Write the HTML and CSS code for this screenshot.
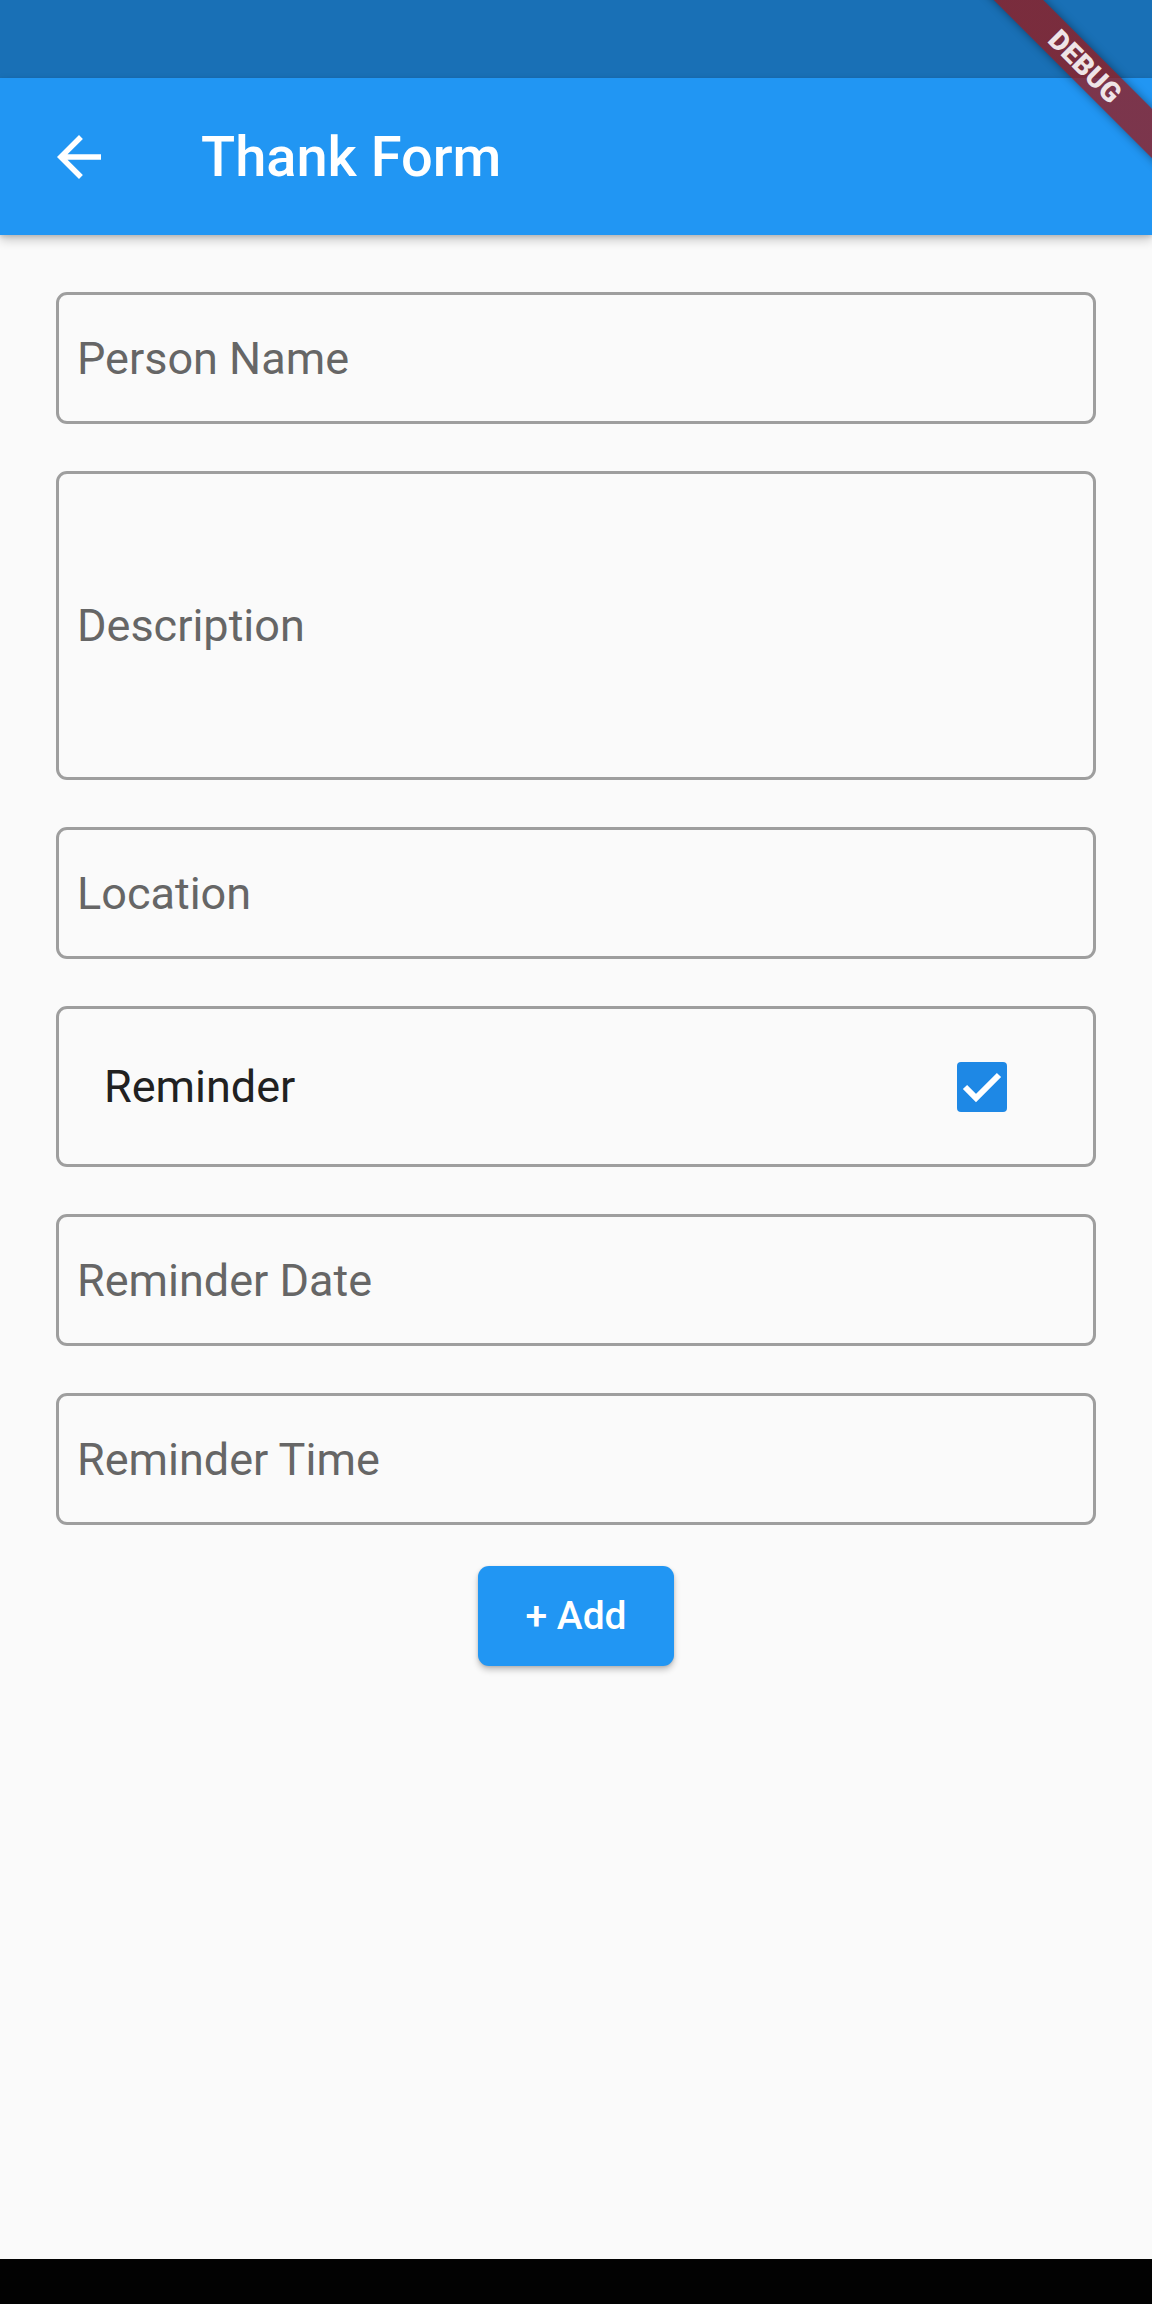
FILE: index.html
```html
<!DOCTYPE html>
<html lang="en">
<head>
<meta charset="utf-8">
<title>Thank Form</title>
<link rel="stylesheet" href="styles.css">
</head>
<body>
<div class="screen">
  <div class="status-bar"></div>
  <header class="app-bar">
    <button class="back" aria-label="Back">
      <svg viewBox="0 0 24 24" width="66" height="66"><path d="M20 11H7.830l5.59-5.59L12 4l-8 8 8 8 1.41-1.41L7.83 13H20v-2z" fill="#fff"/></svg>
    </button>
    <h1 class="title">Thank Form</h1>
  </header>
  <main class="form">
    <div class="fields">
      <div class="field"><span class="placeholder">Person Name</span></div>
      <div class="field field-tall"><span class="placeholder">Description</span></div>
      <div class="field"><span class="placeholder">Location</span></div>
      <div class="field field-check">
        <span class="check-label">Reminder</span>
        <span class="checkbox"><svg viewBox="0 0 50 50" width="50" height="50"><polyline points="8,25 19,36 42,13" fill="none" stroke="#fff" stroke-width="6"/></svg></span>
      </div>
      <div class="field"><span class="placeholder">Reminder Date</span></div>
      <div class="field"><span class="placeholder">Reminder Time</span></div>
    </div>
    <div class="actions">
      <button class="add-btn">+ Add</button>
    </div>
  </main>
  <div class="nav-bar"></div>
  <div class="debug-banner">DEBUG</div>
</div>
</body>
</html>
```

FILE: styles.css
```css
html, body {
  margin: 0;
  padding: 0;
}

body {
  font-family: Roboto, "Noto Sans", "Liberation Sans", sans-serif;
  background: #fafafa;
}

.screen {
  position: relative;
  height: 2304px;
  display: flex;
  flex-direction: column;
  background: #fafafa;
  overflow: hidden;
}

.status-bar {
  height: 78px;
  background: #1970b6;
  flex: none;
}

.app-bar {
  position: relative;
  z-index: 1;
  height: 157px;
  flex: none;
  display: flex;
  align-items: center;
  background: #2196f3;
  box-shadow: 0 5px 10px rgba(0, 0, 0, 0.2), 0 2px 4px rgba(0, 0, 0, 0.12);
}

.back {
  width: 66px;
  height: 66px;
  margin-left: 46px;
  padding: 0;
  border: none;
  background: none;
  display: flex;
}

.title {
  margin: 0 0 0 89px;
  font-size: 56px;
  font-weight: 500;
  color: #fff;
  line-height: 1;
}

.form {
  flex: 1;
  padding: 57px 56px 0;
  display: flex;
  flex-direction: column;
}

.fields {
  display: flex;
  flex-direction: column;
  gap: 47px;
}

.field {
  box-sizing: border-box;
  height: 132px;
  border: 3px solid #9e9e9e;
  border-radius: 11px;
  display: flex;
  align-items: center;
  padding: 0 18px;
  font-size: 45px;
}

.placeholder {
  color: #666;
}

.field-tall {
  height: 309px;
}

.field-check {
  height: 161px;
  padding: 0 86px 0 45px;
  justify-content: space-between;
}

.check-label {
  color: #212121;
}

.checkbox {
  width: 50px;
  height: 50px;
  border-radius: 4px;
  background: #1e88e5;
  display: flex;
}

.actions {
  margin-top: 41px;
  display: flex;
  justify-content: center;
}

.add-btn {
  height: 100px;
  padding: 0 47px;
  border: none;
  border-radius: 11px;
  background: #2196f3;
  color: #fff;
  font-family: Roboto, "Noto Sans", sans-serif;
  font-size: 39px;
  font-weight: 500;
  box-shadow: 0 4px 6px rgba(0, 0, 0, 0.22), 0 1px 3px rgba(0, 0, 0, 0.12);
}

.nav-bar {
  height: 45px;
  flex: none;
  background: #020202;
}

.debug-banner {
  position: absolute;
  z-index: 5;
  left: 955px;
  top: 49px;
  width: 260px;
  height: 35px;
  transform: rotate(45deg);
  display: flex;
  align-items: center;
  justify-content: center;
  background: linear-gradient(rgba(183, 28, 28, 0.63), rgba(183, 28, 28, 0.63)), rgba(0, 0, 0, 0.35);
  box-shadow: 0 0 10px rgba(0, 0, 0, 0.4);
  color: rgba(255, 255, 255, 0.88);
  font-size: 28px;
  font-weight: 900;
  line-height: 1;
}
```
